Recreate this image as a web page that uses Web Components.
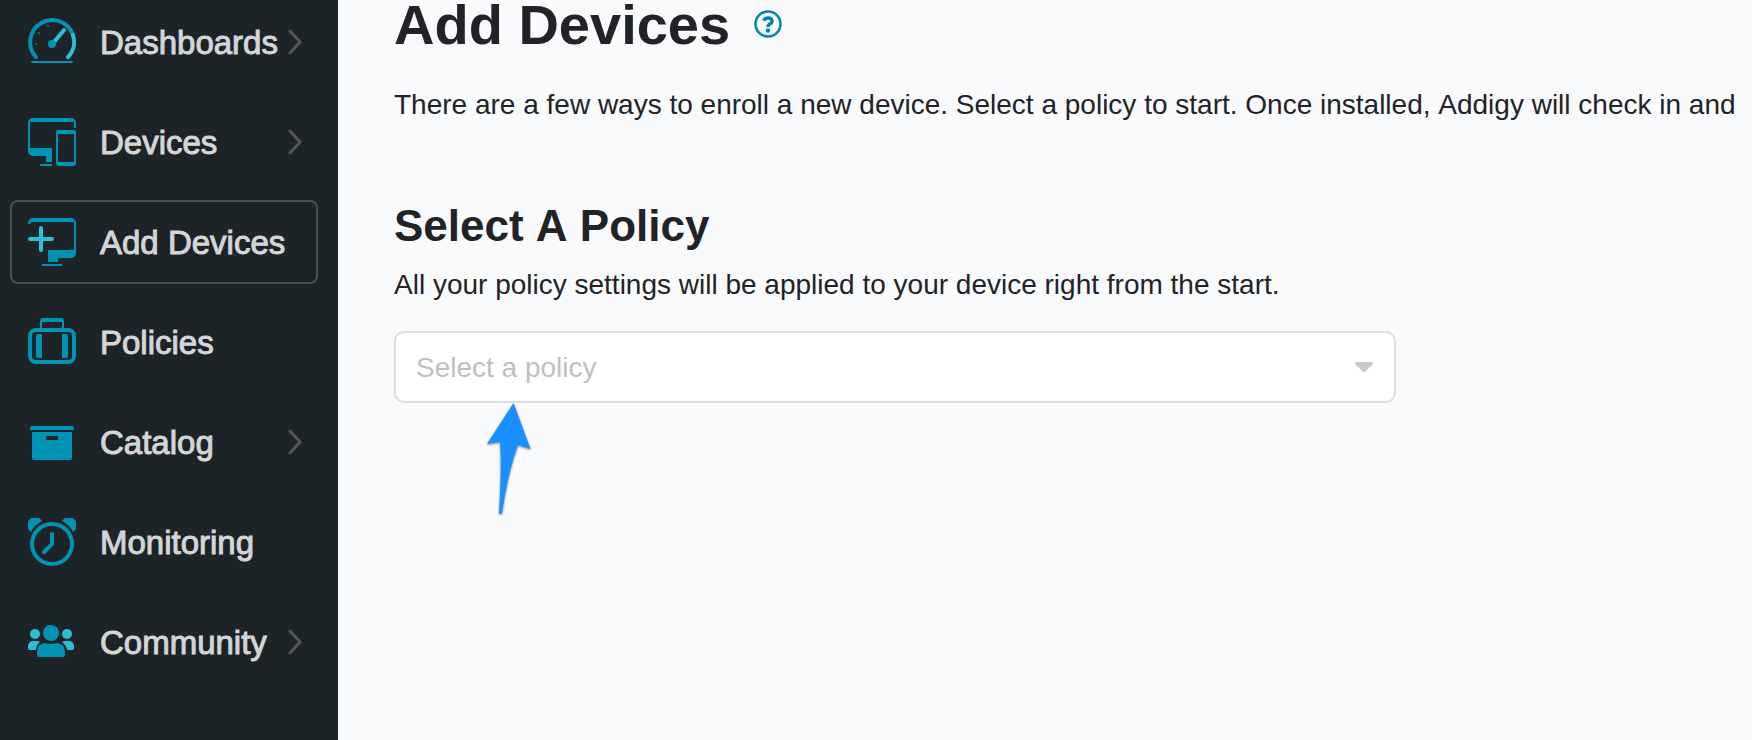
<!DOCTYPE html>
<html lang="en">
<head>
<meta charset="utf-8">
<title>Add Devices</title>
<style>
  html, body { height: 100%; }
  body {
    margin: 0;
    overflow: hidden;
    font-family: "Liberation Sans", Arial, sans-serif;
    font-kerning: none;
    color: #212326;
    background: #f9fafc;
  }
</style>
</head>
<body>
<app-shell>
  <side-nav slot="nav">
    <nav-item icon="dashboards" expandable>Dashboards</nav-item>
    <nav-item icon="devices" expandable>Devices</nav-item>
    <nav-item icon="add" active>Add Devices</nav-item>
    <nav-item icon="policies">Policies</nav-item>
    <nav-item icon="catalog" expandable>Catalog</nav-item>
    <nav-item icon="monitoring">Monitoring</nav-item>
    <nav-item icon="community" expandable>Community</nav-item>
  </side-nav>
  <page-header heading="Add Devices">There are a few ways to enroll a new device. Select a policy to start. Once installed, Addigy will check in and</page-header>
  <policy-select heading="Select A Policy" placeholder="Select a policy">
    All your policy settings will be applied to your device right from the start.
    <pointer-arrow slot="marker"></pointer-arrow>
  </policy-select>
</app-shell>

<script>
const ICONS = {
  dashboards: `
    <g fill="none" stroke="#0093b4" stroke-width="4" stroke-linecap="round">
      <path d="M8 39A22 22 0 1 1 45 17"/>
      <path d="M4 44H44" stroke-width="2"/>
      <path d="M45 17A22 22 0 0 1 40 39" stroke="#2bc0d4"/>
      <path d="M26 24L36 12" stroke="#2bc0d4"/>
    </g>
    <circle cx="24" cy="26" r="4" fill="#0093b4"/>
    <path d="M7 25h2v2H7zM10 14h2v2h-2zM19 7h2v2h-2z" fill="#0093b4" opacity=".6"/>`,
  devices: `
    <g fill="#0093b4">
      <path d="M0 5a5 5 0 0 1 5-5H43a5 5 0 0 1 5 5V10H46V4H2V30H24V44H18V38H5a5 5 0 0 1-5-5zM12 46H24V48H12z"/>
      <path fill-rule="evenodd" d="M31 12H45a3 3 0 0 1 3 3V45a3 3 0 0 1-3 3H31a3 3 0 0 1-3-3V15a3 3 0 0 1 3-3zM30 16V44H46V16z"/>
    </g>`,
  add: `
    <path fill="#0093b4" d="M0 5a5 5 0 0 1 5-5H43a5 5 0 0 1 5 5V35a5 5 0 0 1-5 5H30V44H20V32H46V4H4Q2 4 2 6H0zM14 46H34V48H14z"/>
    <path fill="none" stroke="#2bc0d4" stroke-width="4" stroke-linecap="round" d="M2 21H24M13 10V32"/>`,
  policies: `
    <g fill="none" stroke="#0093b4">
      <rect x="2" y="12" width="44" height="32" rx="6" stroke-width="4"/>
      <path d="M13 11V3q0-2 2-2H33q2 0 2 2V11" stroke-width="2"/>
      <path d="M14 2H34" stroke-width="4"/>
    </g>
    <path fill="#0093b4" d="M10 16H14V40H10Q8 40 8 38V18Q8 16 10 16zM34 16H38Q40 16 40 18V38Q40 40 38 40H34z"/>`,
  catalog: `
    <path fill="#0093b4" d="M4 8H44Q46 8 46 10V12H2V10Q2 8 4 8z"/>
    <path fill="#0093b4" fill-rule="evenodd" d="M4 14H44V40Q44 42 42 42H6Q4 42 4 40zM18 18V22H30V18z"/>`,
  monitoring: `
    <g fill="none" stroke="#0093b4" stroke-width="4" stroke-linecap="round" stroke-linejoin="round">
      <circle cx="24" cy="26" r="20"/>
      <path d="M24 16V26L16 34"/>
    </g>
    <path fill="#0093b4" d="M3 14A8 8 0 1 1 14 3A24 24 0 0 0 3 14zM45 14A8 8 0 1 0 34 3A24 24 0 0 1 45 14z"/>`,
  community: `
    <g fill="#2bc0d4">
      <circle cx="7" cy="16" r="5"/>
      <circle cx="39" cy="16" r="5"/>
      <path d="M5 23H9Q11 23 12 24Q8 27 8 32H2Q0 32 0 30V28A5 5 0 0 1 5 23zM37 23H41A5 5 0 0 1 46 28V30Q46 32 44 32H39Q38 27 34 24Q35 23 37 23z"/>
    </g>
    <g fill="#0093b4">
      <circle cx="23" cy="15" r="8"/>
      <path d="M17 25Q23 27 29 25Q37 26 37 34V37Q37 39 35 39H11Q9 39 9 37V34Q9 26 17 25z"/>
    </g>`
};

class AppShell extends HTMLElement {
  constructor() {
    super();
    this.attachShadow({ mode: 'open' });
  }

  connectedCallback() {
    this.shadowRoot.innerHTML = `
      <style>
        :host {
          display: flex;
          height: 100%;
        }

        main {
          flex: 1;
          min-width: 0;
          padding: 0 0 0 56px;
          overflow: hidden;
        }
      </style>
      <slot name="nav"></slot>
      <main><slot></slot></main>
    `;
  }
}

class SideNav extends HTMLElement {
  constructor() {
    super();
    this.attachShadow({ mode: 'open' });
  }

  connectedCallback() {
    this.shadowRoot.innerHTML = `
      <style>
        :host {
          display: block;
          flex: none;
          width: 338px;
          box-sizing: border-box;
          padding: 0 20px 0 10px;
          background: #1d2427;
        }

        nav {
          display: flex;
          flex-direction: column;
          gap: 16px;
        }
      </style>
      <nav aria-label="Main"><slot></slot></nav>
    `;
  }
}

class NavItem extends HTMLElement {
  constructor() {
    super();
    this.attachShadow({ mode: 'open' });
  }

  connectedCallback() {
    const icon = ICONS[this.getAttribute('icon')] || '';
    const expandable = this.hasAttribute('expandable');

    this.shadowRoot.innerHTML = `
      <style>
        :host {
          display: block;
        }

        a {
          display: flex;
          align-items: center;
          height: 84px;
          box-sizing: border-box;
          padding: 0 14px 0 16px;
          border: 2px solid transparent;
          border-radius: 8px;
          color: #d3d5d6;
          font-size: 33px;
          line-height: 40px;
          text-decoration: none;
          white-space: nowrap;
        }

        :host([active]) a {
          border-color: #4a4f52;
        }

        .icon {
          flex: none;
          width: 48px;
          height: 48px;
          margin-right: 24px;
        }

        .label {
          flex: 1;
          min-width: 0;
          padding-top: 2px;
          -webkit-text-stroke: 1px currentColor;
        }

        .chevron {
          flex: none;
          width: 14px;
          height: 26px;
        }
      </style>
      <a href="#${this.getAttribute('icon')}" ${this.hasAttribute('active') ? 'aria-current="page"' : ''}>
        <svg class="icon" viewBox="0 0 48 48" aria-hidden="true">${icon}</svg>
        <span class="label"><slot></slot></span>
        ${expandable ? `
        <svg class="chevron" viewBox="0 0 14 26" fill="none" stroke="#525659" stroke-width="3" stroke-linecap="round" aria-hidden="true">
          <path d="M2 2L12 13L2 24"></path>
        </svg>` : ''}
      </a>
    `;
  }
}

class PageHeader extends HTMLElement {
  constructor() {
    super();
    this.attachShadow({ mode: 'open' });
  }

  connectedCallback() {
    this.shadowRoot.innerHTML = `
      <style>
        :host {
          display: block;
          margin-bottom: 75px;
        }

        .title {
          display: flex;
          align-items: flex-start;
          gap: 24px;
          margin-bottom: 35px;
        }

        h1 {
          margin: 0;
          font-size: 56px;
          line-height: 50px;
        }

        button {
          margin-top: 10px;
          padding: 0;
          border: none;
          background: none;
          cursor: pointer;
        }

        svg {
          display: block;
          width: 28px;
          height: 28px;
        }

        p {
          margin: 0;
          font-size: 28px;
          line-height: 40px;
          white-space: nowrap;
        }
      </style>
      <div class="title">
        <h1>${this.getAttribute('heading')}</h1>
        <button type="button" aria-label="Help">
          <svg viewBox="0 0 28 28" fill="none" stroke="#0088a3">
            <circle cx="14" cy="14" r="12.500" stroke-width="2.500"></circle>
            <path d="M9.500 10.500Q11 8 14 8Q18 8 18 11Q18 13 16 14Q14 15 14 17" stroke-width="3.500"></path>
            <circle cx="14" cy="20.500" r="2.200" fill="#0088a3" stroke="none"></circle>
          </svg>
        </button>
      </div>
      <p><slot></slot></p>
    `;
  }
}

class PolicySelect extends HTMLElement {
  constructor() {
    super();
    this.attachShadow({ mode: 'open' });
  }

  connectedCallback() {
    this.shadowRoot.innerHTML = `
      <style>
        :host {
          display: block;
        }

        h2 {
          margin: 0 0 13px;
          font-size: 44px;
          line-height: 52px;
        }

        label {
          display: block;
          margin-bottom: 26px;
          font-size: 28px;
          line-height: 40px;
        }

        .field {
          display: grid;
          align-items: center;
          position: relative;
          max-width: 1002px;
        }

        .field > select, .field > svg {
          grid-area: 1 / 1;
        }

        select {
          appearance: none;
          width: 100%;
          height: 72px;
          box-sizing: border-box;
          padding: 0 56px 0 20px;
          border: 2px solid #dcdddd;
          border-radius: 10px;
          background: #fff;
          color: #bfbfbf;
          font: inherit;
          font-size: 28px;
        }

        svg {
          justify-self: end;
          width: 18px;
          height: 10px;
          margin-right: 23px;
          pointer-events: none;
        }
      </style>
      <h2>${this.getAttribute('heading')}</h2>
      <label for="policy"><slot></slot></label>
      <div class="field">
        <select id="policy">
          <option value="">${this.getAttribute('placeholder')}</option>
        </select>
        <svg viewBox="0 0 18 10" aria-hidden="true">
          <path d="M1 0H17Q18 0 18 1V2L11 9Q9 11 7 9L0 2V1Q0 0 1 0z" fill="#c9c9c9"></path>
        </svg>
        <slot name="marker"></slot>
      </div>
    `;
  }
}

// Callout drawn over the page, its tip on the lower edge of the field
class PointerArrow extends HTMLElement {
  constructor() {
    super();
    this.attachShadow({ mode: 'open' });
  }

  connectedCallback() {
    this.shadowRoot.innerHTML = `
      <style>
        :host {
          position: absolute;
          top: 72px;
          left: 90px;
          pointer-events: none;
        }

        svg {
          display: block;
          overflow: visible;
          filter: drop-shadow(0 1px 1px rgba(0, 0, 0, .5));
        }
      </style>
      <svg width="50" height="116" viewBox="0 0 50 116" aria-hidden="true">
        <path d="M29.500 0L46.500 46L34 42Q24 69 18 110Q17 112 15 110Q18 63 16 39L3 41z" fill="#1a8fff"></path>
      </svg>
    `;
  }
}

customElements.define('app-shell', AppShell);
customElements.define('side-nav', SideNav);
customElements.define('nav-item', NavItem);
customElements.define('page-header', PageHeader);
customElements.define('policy-select', PolicySelect);
customElements.define('pointer-arrow', PointerArrow);
</script>
</body>
</html>
